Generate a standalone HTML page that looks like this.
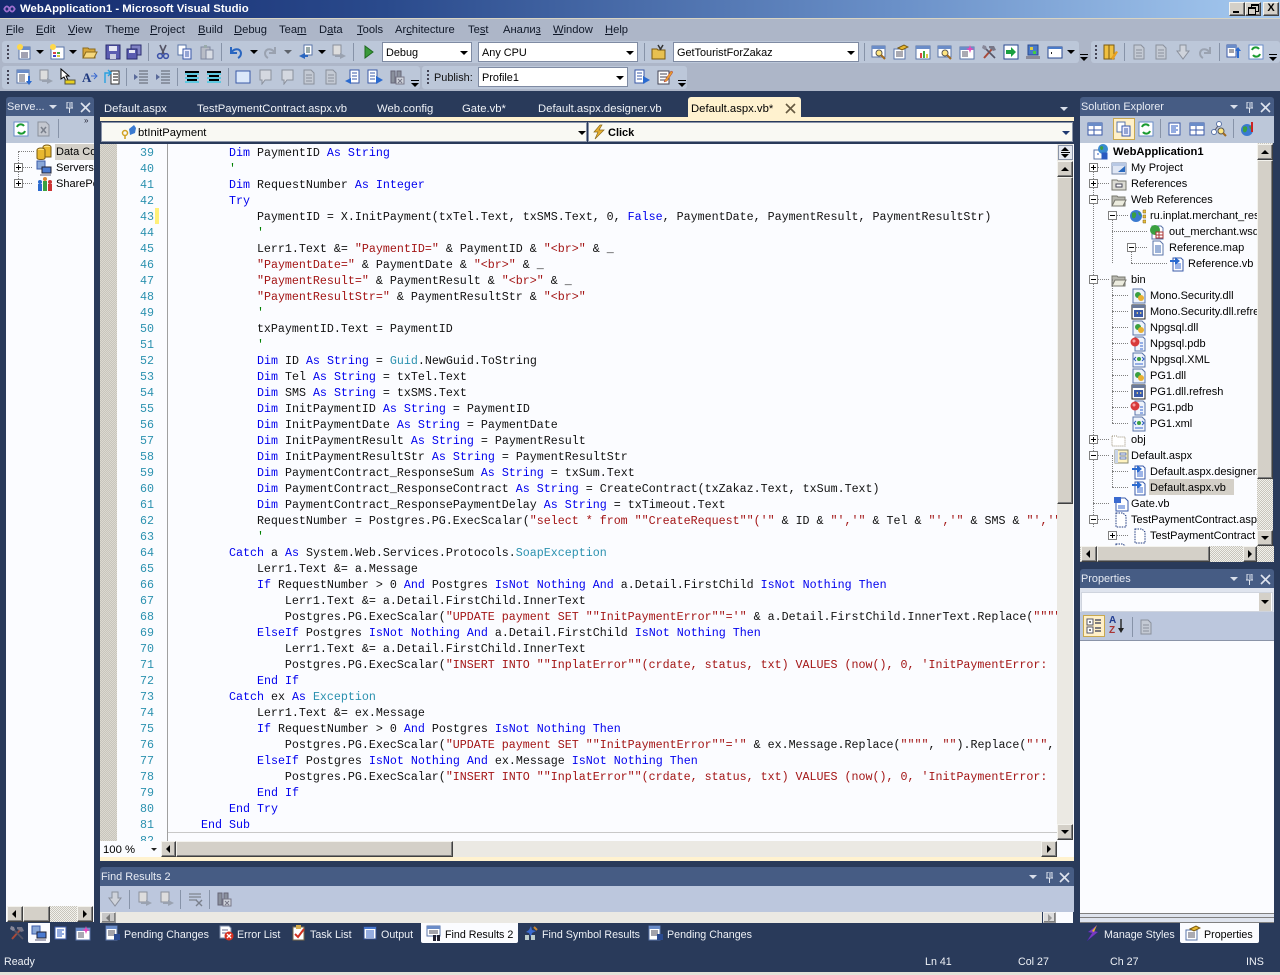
<!DOCTYPE html>
<html><head><meta charset="utf-8"><title>WebApplication1 - Microsoft Visual Studio</title>
<style>
html,body{margin:0;padding:0}
body{width:1280px;height:975px;position:relative;overflow:hidden;background:#293a5a;font:11px "Liberation Sans",sans-serif;color:#000}
div,span.a,svg.i{position:absolute}
.t{white-space:nowrap;line-height:14px}
svg.i{width:16px;height:16px;overflow:visible}
svg.c{width:11px;height:11px;color:#dfe4ee}
.w{color:#eef1f6}
.m{top:23px;color:#101828;font-size:11.2px}
.f{font-size:10.7px}
.tab{font-size:11.3px;top:102px}
.b{background:#d4d0c8;border:1px solid;border-color:#f4f3ee #404040 #404040 #f4f3ee;box-sizing:border-box;box-shadow:inset -1px -1px 0 #808080}
.tr{background:#ebe9e3}
.d{background-color:#f2f1ec;background-image:linear-gradient(45deg,#c8c5bc 25%,transparent 25%,transparent 75%,#c8c5bc 75%),linear-gradient(45deg,#c8c5bc 25%,transparent 25%,transparent 75%,#c8c5bc 75%);background-size:2px 2px;background-position:0 0,1px 1px}
.ar{width:0;height:0;border-style:solid;border-color:transparent}
.au{border-width:0 4px 4px;border-bottom-color:#000}
.ad{border-width:4px 4px 0;border-top-color:#000}
.al{border-width:4px 4px 4px 0;border-right-color:#000}
.arr{border-width:4px 0 4px 4px;border-left-color:#000}
.tb{background:#bcc7d9;border-radius:3px}
.cb{background:#fff;border:1px solid #7f8ba3;box-sizing:border-box;font-size:10.9px;line-height:20px;padding-left:3px;color:#000;white-space:nowrap}
.sep{width:1px;background:#8793a8}
.ph{background:#465c84;border-radius:3px 3px 0 0;color:#e8ecf4;font-size:10.9px;line-height:21px;padding-left:1px;box-sizing:border-box;white-space:nowrap}
pre{position:absolute;margin:0;font:11.67px/16px "Liberation Mono",monospace;color:#111}
b{font-weight:normal;color:#0000ee}
i{font-style:normal;color:#a31515}
u.n{text-decoration:none;color:#2b91af}
em{font-style:normal;color:#008000}
.tree .t{margin-top:1px}
.x{width:9px;height:9px;border:1px solid #808080;background:#fff;box-sizing:border-box}
.x:before{content:"";position:absolute;left:1px;top:3px;width:5px;height:1px;background:#000}
.p:after{content:"";position:absolute;left:3px;top:1px;width:1px;height:5px;background:#000}
.v{border-left:1px dotted #808080;width:0}
.h{border-top:1px dotted #808080;height:0}
</style></head><body>
<svg width="0" height="0" style="position:absolute">
<defs>
<symbol id="pin" viewBox="0 0 11 11"><path d="M3 0h5v6H3zM2 6h7M5.500 6v5" fill="none" stroke="currentColor"/><path d="M6 1v4" stroke="currentColor"/></symbol>
<symbol id="xx" viewBox="0 0 11 11"><path d="M1 1l9 9M10 1l-9 9" stroke="currentColor" stroke-width="1.600"/></symbol>
<symbol id="doc" viewBox="0 0 16 16"><path d="M3 1h7l3 3v11H3z" fill="#fff" stroke="#5a74a8"/><path d="M5 6h6M5 8h6M5 10h6M5 12h6" stroke="#3a64b0"/></symbol>
<symbol id="docg" viewBox="0 0 16 16"><path d="M3 1h7l3 3v11H3z" fill="#c4cad4" stroke="#8a909c"/><path d="M5 6h6M5 9h6M5 12h6" stroke="#8a909c"/></symbol>
<symbol id="new" viewBox="0 0 16 16"><path d="M3 3h11v12H3z" fill="#fff" stroke="#5a74a8"/><path d="M3 3h11v3H3z" fill="#6a8cc8"/><path d="M5 9h7M5 11h7M5 13h7" stroke="#446"/><circle cx="4" cy="3" r="3" fill="#ffd84a"/></symbol>
<symbol id="grid" viewBox="0 0 16 16"><path d="M2 3h13v12H2z" fill="#fff" stroke="#5a74a8"/><path d="M4 8h3v2H4z" fill="#d44"/><path d="M8 8h3v2H8z" fill="#4a4"/><path d="M4 11h3v2H4z" fill="#44c"/><path d="M8 11h3v2H8z" fill="#dc4"/><circle cx="4" cy="3" r="3" fill="#ffd84a"/></symbol>
<symbol id="folder" viewBox="0 0 16 16"><path d="M1 4h5l1 1h6v9H1z" fill="#d9a83a" stroke="#8a6a1c"/><path d="M1 14l3-6h11l-3 6z" fill="#f5d77c" stroke="#8a6a1c"/></symbol>
<symbol id="fg" viewBox="0 0 16 16"><path d="M1 4h5l1 1h7v9H1z" fill="#b8b8b0" stroke="#77776e"/><path d="M1 14l3-6h11l-3 6z" fill="#ececdf" stroke="#77776e"/></symbol>
<symbol id="fe" viewBox="0 0 16 16"><path d="M1 4h5l1 1h7v9H1z" fill="#fff" stroke="#9a9078" stroke-dasharray="1 1"/></symbol>
<symbol id="save" viewBox="0 0 16 16"><path d="M1 1h14v14H1z" fill="#5a5cb0" stroke="#2a2c70"/><path d="M4 2h8v5H4z" fill="#e6e8f4"/><path d="M5 10h6v5H5z" fill="#c8cce0"/></symbol>
<symbol id="saveall" viewBox="0 0 16 16"><path d="M5 1h10v10H5z" fill="#8082c4" stroke="#2a2c70"/><path d="M1 5h10v10H1z" fill="#5a5cb0" stroke="#2a2c70"/><path d="M3 6h6v3H3z" fill="#e6e8f4"/></symbol>
<symbol id="cut" viewBox="0 0 16 16"><path d="M5 1l4 9M11 1l-4 9" stroke="#556" stroke-width="1.600"/><circle cx="5" cy="12" r="2.400" fill="none" stroke="#3a50a8" stroke-width="1.500"/><circle cx="11" cy="12" r="2.400" fill="none" stroke="#3a50a8" stroke-width="1.500"/></symbol>
<symbol id="copy" viewBox="0 0 16 16"><path d="M1 1h8v10H1z" fill="#fff" stroke="#5a74a8"/><path d="M6 5h8v10H6z" fill="#eef" stroke="#3a5aa8"/><path d="M8 8h4M8 10h4M8 12h4" stroke="#3a5aa8"/></symbol>
<symbol id="paste" viewBox="0 0 16 16"><path d="M2 3h9v12H2z" fill="#b8bcc6" stroke="#8088a0"/><path d="M5 1h3v3H5z" fill="#9aa"/><path d="M7 6h7v9H7z" fill="#d8dce4" stroke="#8088a0"/></symbol>
<symbol id="undo" viewBox="0 0 16 16"><path d="M3 3v6h6M3 9c3-5 9-5 10 0 0 2-1 4-3 5" fill="none" stroke="#2a66c0" stroke-width="2"/></symbol>
<symbol id="redo" viewBox="0 0 16 16"><path d="M13 3v6H7M13 9c-3-5-9-5-10 0 0 2 1 4 3 5" fill="none" stroke="#9aa2b0" stroke-width="2"/></symbol>
<symbol id="nav" viewBox="0 0 16 16"><path d="M6 1h8v10H6z" fill="#fff" stroke="#5a74a8"/><path d="M8 4h4M8 6h4M8 8h4" stroke="#355"/><path d="M7 9v6L1 12z" fill="#2a66c0"/><path d="M6 12h4" stroke="#2a66c0" stroke-width="2"/></symbol>
<symbol id="navg" viewBox="0 0 16 16"><path d="M2 1h8v10H2z" fill="#ddd" stroke="#8a909c"/><path d="M9 9v6l6-3z" fill="#9aa2b0"/><path d="M4 12h6" stroke="#9aa2b0" stroke-width="2"/></symbol>
<symbol id="play" viewBox="0 0 16 16"><path d="M5 2l8 6-8 6z" fill="#3a9a3a" stroke="#1f6a1f"/></symbol>
<symbol id="fldp" viewBox="0 0 16 16"><path d="M1 5h5l1 1h7v9H1z" fill="#e8c050" stroke="#7a5a10"/><path d="M7 1l3 5M12 1l-3 5" stroke="#333" stroke-width="1.500"/></symbol>
<symbol id="find" viewBox="0 0 16 16"><path d="M1 2h13v11H1z" fill="#fff" stroke="#5a74a8"/><path d="M1 2h13v3H1z" fill="#6a8cc8"/><circle cx="8" cy="9" r="3" fill="#ffe680" stroke="#555"/><path d="M10 11l4 4" stroke="#a06a20" stroke-width="2"/></symbol>
<symbol id="prop" viewBox="0 0 16 16"><path d="M1 5h11v10H1z" fill="#fff" stroke="#5a74a8"/><path d="M3 8h7M3 10h7M3 12h7" stroke="#556"/><path d="M5 4l6-3 4 2-6 3z" fill="#e8b830" stroke="#7a5a10"/></symbol>
<symbol id="wnd" viewBox="0 0 16 16"><path d="M1 2h14v13H1z" fill="#fff" stroke="#5a74a8"/><path d="M1 2h14v3H1z" fill="#6a8cc8"/><path d="M5 9h2v5H5z" fill="#d44"/><path d="M8 7h2v7H8z" fill="#4a4"/><path d="M11 10h2v4h-2z" fill="#dc4"/></symbol>
<symbol id="wa" viewBox="0 0 16 16"><path d="M1 1h12v13H1z" fill="#fff" stroke="#5a74a8"/><path d="M1 1h12v3H1z" fill="#6a8cc8"/><path d="M3 6h6M3 8h6M3 10h6M3 12h6" stroke="#556"/><path d="M12 7v5h-2l3 4 3-4h-2V7z" fill="#2a6ad0"/></symbol>
<symbol id="tools" viewBox="0 0 16 16"><path d="M3 14L11 5" stroke="#a84a3a" stroke-width="2"/><path d="M8 2l5 0 2 4-3 1-2-2-2-1z" fill="#778"/><path d="M5 5l9 9" stroke="#556" stroke-width="1.600"/><path d="M2 1l3 1 1 3-2 1-3-2z" fill="#889"/></symbol>
<symbol id="go" viewBox="0 0 16 16"><path d="M1 1h14v14H1z" fill="#fff" stroke="#2a4a90"/><path d="M3 6h5V3l5 5-5 5v-3H3z" fill="#1aa040"/></symbol>
<symbol id="ctl" viewBox="0 0 16 16"><path d="M3 1h10v10H3z" fill="#4a7ac8" stroke="#2a4a90"/><path d="M5 3h3v3H5z" fill="#dc4"/><path d="M8 7h3v3H8z" fill="#4c4"/><path d="M1 12h14v3H1z" fill="#8a8a9a"/></symbol>
<symbol id="blank" viewBox="0 0 16 16"><path d="M1 3h14v11H1z" fill="#fff" stroke="#2a4a90"/><path d="M1 3h14v2H1z" fill="#4a7ac8"/><path d="M4 8h1v2H4z" fill="#222"/></symbol>
<symbol id="book" viewBox="0 0 16 16"><path d="M2 1h10v14H2z" fill="#f0c040" stroke="#7a5a10"/><path d="M7 1v14" stroke="#7a5a10"/><path d="M9 14l5-7 2 1-5 8z" fill="#e8a020"/></symbol>
<symbol id="ref" viewBox="0 0 16 16"><path d="M1 1h14v14H1z" fill="#fff" stroke="#6a8cc8"/><path d="M4 6a4 4 0 0 1 7-1M12 10a4 4 0 0 1-7 1" fill="none" stroke="#1a9a30" stroke-width="2"/></symbol>
<symbol id="stop" viewBox="0 0 16 16"><path d="M2 1h8l3 3v11H2z" fill="#c4c8d0" stroke="#8a909c"/><path d="M5 6l5 6M10 6l-5 6" stroke="#7a808c" stroke-width="1.500"/></symbol>
<symbol id="list" viewBox="0 0 16 16"><path d="M2 2h11v12H2z" fill="#fff" stroke="#3a5aa8"/><path d="M4 5h7M4 7h5M4 9h7M4 11h5" stroke="#2a5ac0"/></symbol>
<symbol id="tbl" viewBox="0 0 16 16"><path d="M1 2h14v12H1z" fill="#fff" stroke="#3a5aa8"/><path d="M1 2h14v3H1z" fill="#6a8cc8"/><path d="M7 5v9M1 9h14" stroke="#3a5aa8"/></symbol>
<symbol id="net" viewBox="0 0 16 16"><circle cx="8" cy="3" r="2.500" fill="#fff" stroke="#5a74a8"/><circle cx="3" cy="11" r="2.500" fill="#fff" stroke="#5a74a8"/><path d="M7 5l-3 4" stroke="#556"/><circle cx="10" cy="10" r="3" fill="#ffe680" stroke="#555"/><path d="M12 12l3 3" stroke="#a06a20" stroke-width="2"/></symbol>
<symbol id="globe" viewBox="0 0 16 16"><circle cx="7" cy="9" r="6" fill="#3a7ad0"/><path d="M3 6c3-2 5 0 4 3s-3 3-4 1zM9 5c2 0 4 2 3 4l-2-1z" fill="#3aa040"/><path d="M12 1v10" stroke="#c22" stroke-width="2"/></symbol>
<symbol id="web" viewBox="0 0 16 16"><path d="M1 6h10v9H1z" fill="#fff" stroke="#5a74a8"/><circle cx="10" cy="5" r="5" fill="#3a8ad0"/><path d="M7 3c2-2 4 0 3 2s-3 1-3-2z" fill="#3aa040"/><path d="M4 10h2M9 9h5v6H9z" fill="#2a5ac0" stroke="#2a5ac0"/></symbol>
<symbol id="myp" viewBox="0 0 16 16"><path d="M1 3h14v11H1z" fill="#dfe6f4" stroke="#7a8aa8"/><path d="M1 3h14v3H1z" fill="#b8c8e4"/><path d="M7 12l7-6v6z" fill="#2a6ac0"/></symbol>
<symbol id="refs" viewBox="0 0 16 16"><path d="M1 4h5l1 1h8v9H1z" fill="#dcdcd4" stroke="#77776e"/><path d="M5 8h6v3H5z" fill="#fff" stroke="#445"/></symbol>
<symbol id="webr" viewBox="0 0 16 16"><circle cx="6" cy="8" r="6" fill="#3a7ad0"/><path d="M2 5c3-2 5 0 4 3s-3 3-4 1zM8 4c2 0 3 2 3 4l-2-1z" fill="#3aa040"/><path d="M13 2h3v3h-3zM13 7h3v3h-3zM13 12h3v3h-3z" fill="#e8c040" stroke="#7a5a10" stroke-width=".5"/></symbol>
<symbol id="wsd" viewBox="0 0 16 16"><path d="M3 2h9l2 2v11H3z" fill="#fff" stroke="#5a74a8"/><circle cx="6" cy="6" r="5" fill="#3aa040"/><path d="M7 8h7v6H7z" fill="#fff" stroke="#a33"/><path d="M10 8v6M7 11h7" stroke="#a33"/></symbol>
<symbol id="vb" viewBox="0 0 16 16"><path d="M4 2h8l2 2v11H4z" fill="#fff" stroke="#3a5aa8"/><path d="M6 8h6M6 10h6M6 12h6" stroke="#3a6ad0"/><path d="M1 3h5V0l5 4-5 4V5H1z" fill="#2a6ad0" transform="translate(0 1)"/></symbol>
<symbol id="dll" viewBox="0 0 16 16"><path d="M2 1h9l3 3v11H2z" fill="#eef3fb" stroke="#5a74a8"/><circle cx="7" cy="7" r="3" fill="#3aa040"/><circle cx="10" cy="10" r="3" fill="#e8b030"/></symbol>
<symbol id="ref2" viewBox="0 0 16 16"><path d="M1 1h13v14H1z" fill="#fff" stroke="#222"/><path d="M1 1h13v3H1z" fill="#6a7a9a"/><path d="M3 6h9v7H3z" fill="#3a5aa8"/><path d="M5 9l2-1v2zM9 8l2 1-2 1z" fill="#ffe680"/></symbol>
<symbol id="pdb" viewBox="0 0 16 16"><path d="M5 1h8l2 2v12H5z" fill="#eef3fb" stroke="#5a74a8"/><path d="M10 7h3M10 10h3M10 13h3" stroke="#3a6ad0"/><circle cx="5" cy="6" r="4.500" fill="#d83a3a"/><circle cx="4" cy="5" r="1.500" fill="#f5a0a0"/></symbol>
<symbol id="xml" viewBox="0 0 16 16"><path d="M2 1h9l3 3v11H2z" fill="#eef3fb" stroke="#5a74a8"/><circle cx="8" cy="7" r="2" fill="#3aa040"/><path d="M5 5L3 7l2 2M11 5l2 2-2 2" stroke="#2a5ac0" fill="none"/><path d="M4 12h8" stroke="#3a6ad0"/></symbol>
<symbol id="aspx" viewBox="0 0 16 16"><path d="M2 2h13v13H2z" fill="#fff3c0" stroke="#8a8a70"/><path d="M2 2h3v13H2z" fill="#c8d4e8"/><path d="M7 5h6v2H7zM7 9h6v2H7z" fill="#fff" stroke="#3a5aa8" stroke-width=".7"/></symbol>
<symbol id="gate" viewBox="0 0 16 16"><path d="M3 2h9l3 3v10H3z" fill="#fff" stroke="#3a5aa8"/><path d="M1 1h7v6H1z" fill="#3a6ad0"/><path d="M5 10h7M5 12h7" stroke="#3a6ad0"/></symbol>
<symbol id="pg" viewBox="0 0 16 16"><path d="M4 1h7l3 3v11H4z" fill="#fff" stroke="#1f3a80" stroke-dasharray="1.500 1"/></symbol>
<symbol id="db" viewBox="0 0 16 16"><ellipse cx="11" cy="3" rx="4" ry="2" fill="#ffe27a" stroke="#7a5a10"/><path d="M7 3v10h8V3" fill="#e8b830" stroke="#7a5a10"/><ellipse cx="5" cy="6" rx="4" ry="2" fill="#ffe27a" stroke="#7a5a10"/><path d="M1 6v8c0 2 8 2 8 0V6" fill="#e8b830" stroke="#7a5a10"/></symbol>
<symbol id="srv" viewBox="0 0 16 16"><path d="M1 1h8v8H1z" fill="#8aa8d8" stroke="#3a5aa8"/><path d="M6 7h9v6H6z" fill="#4a7ad0" stroke="#223"/><path d="M4 14h11v2H4z" fill="#aab"/></symbol>
<symbol id="sp" viewBox="0 0 16 16"><circle cx="3" cy="6" r="2" fill="#2a6ad0"/><path d="M1 8h4v7H1z" fill="#2a6ad0"/><circle cx="8" cy="3" r="2" fill="#d83"/><path d="M6 5h4v10H6z" fill="#3aa040"/><circle cx="13" cy="6" r="2" fill="#c33"/><path d="M11 8h4v7h-4z" fill="#c33"/></symbol>
<symbol id="pend" viewBox="0 0 16 16"><path d="M1 1h11v14H1z" fill="#fff" stroke="#5a74a8"/><path d="M1 1h11v3H1z" fill="#6a8cc8"/><path d="M3 6h7M3 8h7M3 10h7" stroke="#445"/><path d="M9 9h6v6H9z" fill="#2a4a90"/></symbol>
<symbol id="err" viewBox="0 0 16 16"><path d="M2 1h9l2 2v10H2z" fill="#fff" stroke="#7a8aa8"/><path d="M4 5h6M4 8h4" stroke="#668"/><circle cx="11" cy="11" r="4.500" fill="#d83020"/><path d="M9 9l4 4M13 9l-4 4" stroke="#fff" stroke-width="1.300"/></symbol>
<symbol id="task" viewBox="0 0 16 16"><path d="M2 2h11v13H2z" fill="#fff" stroke="#7a6a4a"/><path d="M5 0h5v4H5z" fill="#d8b050"/><path d="M4 9l3 3 6-8" fill="none" stroke="#d03020" stroke-width="2"/></symbol>
<symbol id="out" viewBox="0 0 16 16"><path d="M2 2h12v12H2z" fill="#fff" stroke="#2a4a90"/><path d="M2 2h12v2H2z" fill="#4a7ad0"/><path d="M4 6h8M4 8h8M4 10h8M4 12h8" stroke="#2a5ac0"/></symbol>
<symbol id="fr" viewBox="0 0 16 16"><path d="M1 1h13v10H1z" fill="#fff" stroke="#5a74a8"/><path d="M1 1h13v3H1z" fill="#6a8cc8"/><path d="M3 6h9M3 8h9" stroke="#445"/><path d="M7 10h3v6H7zM11 10h3v6h-3z" fill="#223"/></symbol>
<symbol id="fs" viewBox="0 0 16 16"><path d="M8 1l1 4 4 1-4 2-1 4-2-4-3-1 3-2z" fill="#3a6ad0"/><path d="M2 10h4v5H2zM8 10h4v5H8z" fill="#bcc"/><path d="M11 2l3 3" stroke="#c83" stroke-width="2"/></symbol>
<symbol id="sd" viewBox="0 0 16 16"><path d="M1 3h14v12H1z" fill="#fff" stroke="#5a74a8"/><path d="M1 3h14v3H1z" fill="#6a8cc8"/><path d="M3 8h6M3 10h6M3 12h6" stroke="#556"/><path d="M11 1l1 3 3 1-3 1-1 3-1-3-3-1 3-1z" fill="#e848b8"/></symbol>
<symbol id="ms" viewBox="0 0 16 16"><path d="M12 0L3 7l4 1-5 8 11-9-4-1z" fill="#7a3ac0" stroke="#3a2a90" stroke-width=".5"/><path d="M12 0L7 6l2 1z" fill="#e8b830"/></symbol>
<symbol id="gp" viewBox="0 0 16 16"><path d="M1 1h6v6H1zM1 9h6v6H1z" fill="#fff" stroke="#556"/><path d="M9 2h6M9 5h6M9 10h6M9 13h6" stroke="#556" stroke-width="1.400"/><path d="M3 4h2M3 12h2" stroke="#000"/></symbol>
<symbol id="az" viewBox="0 0 16 16"><path d="M12 1v12" stroke="#222" stroke-width="1.400"/><path d="M9 10l3 5 3-5z" fill="#222"/></symbol>
<symbol id="indl" viewBox="0 0 16 16"><path d="M6 2h9M6 5h9M6 8h9M6 11h9M6 14h9" stroke="#5a5f6a"/><path d="M5 8L1 5v6z" fill="#5a6a9a"/></symbol>
<symbol id="cmt" viewBox="0 0 16 16"><path d="M1 2h14v2H1zM3 6h10v2H3zM3 10h10v2H3z" fill="#000"/><path d="M1 5h14M1 9h14M1 13h14" stroke="#00c8e8"/></symbol>
<symbol id="bub" viewBox="0 0 16 16"><path d="M3 1h11v10H8l-3 4v-4H3z" fill="#d4d8e0" stroke="#8a909c"/></symbol>
<symbol id="rect" viewBox="0 0 16 16"><path d="M1 2h14v12H1z" fill="#dbe8fa" stroke="#3a5aa8"/></symbol>
<symbol id="nb" viewBox="0 0 16 16"><path d="M5 1h9v13H5z" fill="#fff" stroke="#3a5aa8"/><path d="M7 4h5M7 7h5M7 10h5" stroke="#3a5aa8"/><path d="M6 9v6L0 12z" fill="#2a6ad0"/></symbol>
<symbol id="nf" viewBox="0 0 16 16"><path d="M1 1h9v13H1z" fill="#fff" stroke="#3a5aa8"/><path d="M3 4h5M3 7h5M3 10h5" stroke="#3a5aa8"/><path d="M9 7v8l7-4z" fill="#2a6ad0"/></symbol>
<symbol id="edit" viewBox="0 0 16 16"><path d="M1 2h11v13H1z" fill="#fff" stroke="#445"/><path d="M3 5h7M3 8h7M3 11h5" stroke="#445"/><path d="M8 11l6-9 2 1-6 9-3 1z" fill="#e8a030" stroke="#a33" stroke-width=".5"/></symbol>
<symbol id="sr" viewBox="0 0 16 16"><path d="M1 1h9v12H1z" fill="#fff" stroke="#3a5aa8"/><path d="M1 1h9v3H1z" fill="#6a8cc8"/><path d="M3 6h5M3 8h5" stroke="#445"/><path d="M12 3l3 4h-2v7h-2V7H9z" fill="#2a6ad0"/></symbol>
<symbol id="bino" viewBox="0 0 16 16"><path d="M2 2h4v12H2zM8 2h4v6H8z" fill="#8a909c" stroke="#667"/><path d="M7 8h8v7H7z" fill="#d0d4dc" stroke="#778"/><path d="M9 10l4 4M13 10l-4 4" stroke="#778"/></symbol>
<symbol id="cut2" viewBox="0 0 16 16"><path d="M1 3h12M1 6h12M1 9h8" stroke="#8a909c" stroke-width="1.400"/><path d="M8 9l6 6M14 9l-6 6" stroke="#7a808c" stroke-width="1.400"/></symbol>
<symbol id="hand" viewBox="0 0 16 16"><path d="M5 1h6v6h3l-6 8-6-8h3z" fill="#cfd3db" stroke="#8a909c"/></symbol>
</defs></svg>

<!-- Title bar -->
<div style="left:0;top:0;width:1280px;height:18px;background:linear-gradient(90deg,#14296c 0%,#2a4a8c 30%,#6a90c8 70%,#a6caf0 100%)"></div>
<div style="left:0;top:18px;width:1280px;height:1px;background:#d8d4c4"></div>
<svg class="i" style="left:2px;top:2px;width:15px;height:14px" viewBox="0 0 16 16"><path d="M2 8c2-4 4-4 6 0s4 4 6 0c-2-4-4-4-6 0s-4 4-6 0z" fill="none" stroke="#a070d0" stroke-width="2"/></svg>
<div class="t" style="left:20px;top:2px;color:#fff;font-size:11.4px;font-weight:bold">WebApplication1 - Microsoft Visual Studio</div>
<div class="b" style="left:1229px;top:2px;width:16px;height:14px"><div style="left:3px;top:8px;width:6px;height:2px;background:#000"></div></div>
<div class="b" style="left:1245px;top:2px;width:16px;height:14px"><div style="left:5px;top:1px;width:6px;height:5px;border:1px solid #000;border-top-width:2px"></div><div style="left:2px;top:4px;width:6px;height:5px;border:1px solid #000;border-top-width:2px;background:#d4d0c8"></div></div>
<div class="b" style="left:1263px;top:2px;width:16px;height:14px;font:bold 11px/11px 'Liberation Sans';text-align:center">X</div>

<!-- Menu and toolbar area -->
<div style="left:0;top:19px;width:1280px;height:72px;background:#adb6c8"></div>
<div class="t m" style="left:6px"><u>F</u>ile</div>
<div class="t m" style="left:36px"><u>E</u>dit</div>
<div class="t m" style="left:68px"><u>V</u>iew</div>
<div class="t m" style="left:105px">The<u>m</u>e</div>
<div class="t m" style="left:150px"><u>P</u>roject</div>
<div class="t m" style="left:198px"><u>B</u>uild</div>
<div class="t m" style="left:234px"><u>D</u>ebug</div>
<div class="t m" style="left:279px">Tea<u>m</u></div>
<div class="t m" style="left:319px">D<u>a</u>ta</div>
<div class="t m" style="left:357px"><u>T</u>ools</div>
<div class="t m" style="left:395px">Ar<u>c</u>hitecture</div>
<div class="t m" style="left:468px">Te<u>s</u>t</div>
<div class="t m" style="left:503px">Анали<u>з</u></div>
<div class="t m" style="left:553px"><u>W</u>indow</div>
<div class="t m" style="left:605px"><u>H</u>elp</div>

<div class="tb" style="left:2px;top:41px;width:1077px;height:22px"></div>
<div class="tb" style="left:1091px;top:41px;width:189px;height:22px"></div>
<div class="tb" style="left:2px;top:66px;width:418px;height:23px"></div>
<div class="tb" style="left:422px;top:66px;width:265px;height:23px"></div>
<div style="left:7px;top:45px;width:2px;height:15px;background:repeating-linear-gradient(#445 0 2px,transparent 2px 4px)"></div>
<div style="left:7px;top:70px;width:2px;height:15px;background:repeating-linear-gradient(#445 0 2px,transparent 2px 4px)"></div>
<div style="left:427px;top:70px;width:2px;height:15px;background:repeating-linear-gradient(#445 0 2px,transparent 2px 4px)"></div>
<div style="left:1095px;top:45px;width:2px;height:15px;background:repeating-linear-gradient(#445 0 2px,transparent 2px 4px)"></div>

<svg class="i" style="left:16px;top:44px"><use href="#new"/></svg><div class="ar ad" style="left:36px;top:50px"></div>
<svg class="i" style="left:49px;top:44px"><use href="#grid"/></svg><div class="ar ad" style="left:69px;top:50px"></div>
<svg class="i" style="left:82px;top:44px"><use href="#folder"/></svg>
<svg class="i" style="left:105px;top:44px"><use href="#save"/></svg>
<svg class="i" style="left:126px;top:44px"><use href="#saveall"/></svg>
<div class="sep" style="left:148px;top:43px;height:18px"></div>
<svg class="i" style="left:155px;top:44px"><use href="#cut"/></svg>
<svg class="i" style="left:177px;top:44px"><use href="#copy"/></svg>
<svg class="i" style="left:199px;top:44px"><use href="#paste"/></svg>
<div class="sep" style="left:221px;top:43px;height:18px"></div>
<svg class="i" style="left:228px;top:44px"><use href="#undo"/></svg><div class="ar ad" style="left:250px;top:50px"></div>
<svg class="i" style="left:262px;top:44px"><use href="#redo"/></svg><div class="ar ad" style="left:284px;top:50px;opacity:.5"></div>
<svg class="i" style="left:298px;top:44px"><use href="#nav"/></svg><div class="ar ad" style="left:318px;top:50px"></div>
<svg class="i" style="left:331px;top:44px"><use href="#navg"/></svg>
<div class="sep" style="left:353px;top:43px;height:18px"></div>
<svg class="i" style="left:360px;top:44px"><use href="#play"/></svg>
<div class="cb" style="left:382px;top:42px;width:90px;height:20px">Debug<div class="ar ad" style="right:3px;top:8px"></div></div>
<div class="cb" style="left:478px;top:42px;width:160px;height:20px">Any CPU<div class="ar ad" style="right:3px;top:8px"></div></div>
<div class="sep" style="left:644px;top:43px;height:18px"></div>
<svg class="i" style="left:651px;top:44px"><use href="#fldp"/></svg>
<div class="cb" style="left:673px;top:42px;width:186px;height:20px">GetTouristForZakaz<div class="ar ad" style="right:3px;top:8px"></div></div>
<div class="sep" style="left:864px;top:43px;height:18px"></div>
<svg class="i" style="left:871px;top:44px"><use href="#find"/></svg>
<svg class="i" style="left:893px;top:44px"><use href="#prop"/></svg>
<svg class="i" style="left:915px;top:44px"><use href="#wnd"/></svg>
<svg class="i" style="left:937px;top:44px"><use href="#find"/></svg>
<svg class="i" style="left:959px;top:44px"><use href="#sd"/></svg>
<svg class="i" style="left:981px;top:44px"><use href="#tools"/></svg>
<svg class="i" style="left:1003px;top:44px"><use href="#go"/></svg>
<svg class="i" style="left:1025px;top:44px"><use href="#ctl"/></svg>
<svg class="i" style="left:1047px;top:44px"><use href="#blank"/></svg><div class="ar ad" style="left:1067px;top:50px"></div>
<div style="left:1080px;top:54px;width:8px;height:1px;background:#000"></div><div class="ar ad" style="left:1080px;top:57px"></div>
<svg class="i" style="left:1102px;top:44px"><use href="#book"/></svg>
<div class="sep" style="left:1124px;top:43px;height:18px"></div>
<svg class="i" style="left:1131px;top:44px"><use href="#docg"/></svg>
<svg class="i" style="left:1153px;top:44px"><use href="#docg"/></svg>
<svg class="i" style="left:1175px;top:44px"><use href="#hand"/></svg>
<svg class="i" style="left:1197px;top:44px"><use href="#redo"/></svg>
<div class="sep" style="left:1219px;top:43px;height:18px"></div>
<svg class="i" style="left:1226px;top:44px"><use href="#sr"/></svg>
<svg class="i" style="left:1248px;top:44px"><use href="#ref"/></svg>
<div style="left:1269px;top:54px;width:8px;height:1px;background:#000"></div><div class="ar ad" style="left:1269px;top:57px"></div>

<svg class="i" style="left:16px;top:69px"><use href="#wa"/></svg>
<svg class="i" style="left:38px;top:69px"><use href="#navg"/></svg>
<svg class="i" style="left:60px;top:69px" viewBox="0 0 16 16"><path d="M1 0v10l3-2 2 4 2-1-2-4h3z" fill="#fff" stroke="#000"/><path d="M5 11h10v4H5z" fill="#e8d020" stroke="#554"/></svg>
<svg class="i" style="left:82px;top:69px" viewBox="0 0 16 16"><text x="0" y="13" font-family="Liberation Serif" font-size="13" font-weight="bold" fill="#1f3a80">A</text><path d="M9 7h6M12 4l3 3-3 3" stroke="#3a6ad0" fill="none"/></svg>
<svg class="i" style="left:104px;top:69px" viewBox="0 0 16 16"><path d="M7 2h8v13H7z" fill="#fff" stroke="#333"/><path d="M9 5h5M9 8h5M9 11h5" stroke="#111"/><path d="M1 14V4h5M4 1l3 3-3 3" stroke="#28a0e0" fill="none" stroke-width="1.400"/></svg>
<div class="sep" style="left:126px;top:68px;height:18px"></div>
<svg class="i" style="left:133px;top:69px"><use href="#indl"/></svg>
<svg class="i" style="left:155px;top:69px"><use href="#indl"/></svg>
<div class="sep" style="left:177px;top:68px;height:18px"></div>
<svg class="i" style="left:184px;top:69px"><use href="#cmt"/></svg>
<svg class="i" style="left:206px;top:69px"><use href="#cmt"/></svg>
<div class="sep" style="left:228px;top:68px;height:18px"></div>
<svg class="i" style="left:235px;top:69px"><use href="#rect"/></svg>
<svg class="i" style="left:257px;top:69px"><use href="#bub"/></svg>
<svg class="i" style="left:279px;top:69px"><use href="#bub"/></svg>
<svg class="i" style="left:301px;top:69px"><use href="#docg"/></svg>
<svg class="i" style="left:323px;top:69px"><use href="#docg"/></svg>
<svg class="i" style="left:345px;top:69px"><use href="#nb"/></svg>
<svg class="i" style="left:367px;top:69px"><use href="#nf"/></svg>
<svg class="i" style="left:389px;top:69px"><use href="#bino"/></svg>
<div style="left:411px;top:80px;width:8px;height:1px;background:#000"></div><div class="ar ad" style="left:411px;top:83px"></div>
<div class="t" style="left:434px;top:71px;font-size:10.9px;color:#111">Publish:</div>
<div class="cb" style="left:478px;top:67px;width:150px;height:20px">Profile1<div class="ar ad" style="right:3px;top:8px"></div></div>
<svg class="i" style="left:634px;top:69px"><use href="#nf"/></svg>
<svg class="i" style="left:657px;top:69px"><use href="#edit"/></svg>
<div style="left:678px;top:80px;width:8px;height:1px;background:#000"></div><div class="ar ad" style="left:678px;top:83px"></div>

<!-- Server panel -->
<div class="ph" style="left:6px;top:97px;width:88px;height:19px">Serve...</div>
<div class="ar ad" style="left:49px;top:105px;border-top-color:#d8deea"></div>
<svg class="i c" style="left:64px;top:102px"><use href="#pin"/></svg>
<svg class="i c" style="left:80px;top:102px"><use href="#xx"/></svg>
<div style="left:6px;top:116px;width:88px;height:27px;background:#bcc7d9"></div>
<div class="t" style="left:84px;top:114px;font-size:8px;color:#223">&#187;</div>
<svg class="i" style="left:13px;top:121px"><use href="#ref"/></svg>
<svg class="i" style="left:36px;top:121px"><use href="#stop"/></svg>
<div class="sep" style="left:58px;top:119px;height:19px"></div>
<div class="tree" style="left:6px;top:143px;width:88px;height:779px;background:#fbfcff;overflow:hidden">
  <div style="left:49px;top:1px;width:39px;height:16px;background:#d4d0c8"></div>
  <div class="t" style="left:50px;top:1px">Data Connections</div>
  <div class="t" style="left:50px;top:17px">Servers</div>
  <div class="t" style="left:50px;top:33px">SharePoint</div>
</div>
<div class="v" style="left:18px;top:151px;height:28px"></div>
<div class="h" style="left:18px;top:151px;width:16px"></div>
<div class="h" style="left:23px;top:167px;width:9px"></div>
<div class="h" style="left:23px;top:183px;width:9px"></div>
<div class="x p" style="left:14px;top:163px"></div>
<div class="x p" style="left:14px;top:179px"></div>
<svg class="i" style="left:36px;top:144px"><use href="#db"/></svg>
<svg class="i" style="left:36px;top:160px"><use href="#srv"/></svg>
<svg class="i" style="left:37px;top:176px"><use href="#sp"/></svg>
<div class="d" style="left:7px;top:906px;width:85px;height:16px"></div>
<div class="b" style="left:7px;top:906px;width:16px;height:16px"><div class="ar al" style="left:4px;top:3px"></div></div>
<div class="b" style="left:23px;top:906px;width:27px;height:16px"></div>
<div class="b" style="left:77px;top:906px;width:16px;height:16px"><div class="ar arr" style="left:5px;top:3px"></div></div>

<!-- Tabs -->
<div class="t w tab" style="left:104px">Default.aspx</div>
<div class="t w tab" style="left:197px">TestPaymentContract.aspx.vb</div>
<div class="t w tab" style="left:377px">Web.config</div>
<div class="t w tab" style="left:462px">Gate.vb*</div>
<div class="t w tab" style="left:538px">Default.aspx.designer.vb</div>
<div style="left:688px;top:97px;width:113px;height:21px;background:#fff2cf;border-radius:3px 3px 0 0"></div>
<div class="t tab" style="left:691px">Default.aspx.vb*</div>
<svg class="i c" style="left:785px;top:103px;color:#665a40"><use href="#xx"/></svg>
<div class="ar ad" style="left:1060px;top:107px;border-top-color:#d8deea"></div>
<div style="left:100px;top:117px;width:974px;height:4px;background:#fff2cf"></div>

<!-- Nav bar -->
<div style="left:100px;top:121px;width:974px;height:23px;background:#293a5a"></div>
<div style="left:101px;top:122px;width:486px;height:20px;background:#f9f9f3;border:1px solid #8a94a8;box-sizing:border-box"></div>
<div style="left:588px;top:122px;width:485px;height:20px;background:#f9f9f3;border:1px solid #8a94a8;box-sizing:border-box"></div>
<svg class="i" style="left:121px;top:124px" viewBox="0 0 16 16"><circle cx="4" cy="9" r="2.500" fill="none" stroke="#d0a020" stroke-width="1.500"/><path d="M4 11v4" stroke="#d0a020" stroke-width="1.500"/><path d="M8 5l5-4 2 3-1 5-5 2z" fill="#3a7ad0"/></svg>
<div class="t" style="left:138px;top:126px;font-size:11.2px">btInitPayment</div>
<div class="ar ad" style="left:578px;top:131px"></div>
<svg class="i" style="left:591px;top:124px" viewBox="0 0 16 16"><path d="M9 1L3 8h4l-3 7 9-9H8l3-5z" fill="#e8b030" stroke="#8a6a1c" stroke-width=".7"/></svg>
<div class="t" style="left:608px;top:126px;font-size:11px;font-weight:bold">Click</div>
<div class="ar ad" style="left:1062px;top:131px;border-top-color:#1f3a70"></div>

<!-- Editor -->
<div style="left:100px;top:144px;width:974px;height:697px;background:#fbfcff;overflow:hidden">
  <div class="d" style="left:0;top:0;width:17px;height:697px;background-color:#dcd9d0"></div>
  <div style="left:67px;top:0;width:1px;height:697px;background:#a0a0a0"></div>
  <div style="left:55px;top:64px;width:4px;height:16px;background:#fff07a"></div>
  <div style="left:68px;top:688px;width:890px;height:1px;background:#c8c8c8"></div>
<pre style="left:24px;top:1px;width:30px;text-align:right;color:#2b91af">39
40
41
42
43
44
45
46
47
48
49
50
51
52
53
54
55
56
57
58
59
60
61
62
63
64
65
66
67
68
69
70
71
72
73
74
75
76
77
78
79
80
81
82</pre>
<div style="left:73px;top:0;width:885px;height:697px;overflow:hidden">
<pre style="left:0;top:1px">        <b>Dim</b> PaymentID <b>As</b> <b>String</b>
        <em>'</em>
        <b>Dim</b> RequestNumber <b>As</b> <b>Integer</b>
        <b>Try</b>
            PaymentID = X.InitPayment(txTel.Text, txSMS.Text, 0, <b>False</b>, PaymentDate, PaymentResult, PaymentResultStr)
            <em>'</em>
            Lerr1.Text &amp;= <i>"PaymentID="</i> &amp; PaymentID &amp; <i>"&lt;br&gt;"</i> &amp; _
            <i>"PaymentDate="</i> &amp; PaymentDate &amp; <i>"&lt;br&gt;"</i> &amp; _
            <i>"PaymentResult="</i> &amp; PaymentResult &amp; <i>"&lt;br&gt;"</i> &amp; _
            <i>"PaymentResultStr="</i> &amp; PaymentResultStr &amp; <i>"&lt;br&gt;"</i>
            <em>'</em>
            txPaymentID.Text = PaymentID
            <em>'</em>
            <b>Dim</b> ID <b>As</b> <b>String</b> = <u class="n">Guid</u>.NewGuid.ToString
            <b>Dim</b> Tel <b>As</b> <b>String</b> = txTel.Text
            <b>Dim</b> SMS <b>As</b> <b>String</b> = txSMS.Text
            <b>Dim</b> InitPaymentID <b>As</b> <b>String</b> = PaymentID
            <b>Dim</b> InitPaymentDate <b>As</b> <b>String</b> = PaymentDate
            <b>Dim</b> InitPaymentResult <b>As</b> <b>String</b> = PaymentResult
            <b>Dim</b> InitPaymentResultStr <b>As</b> <b>String</b> = PaymentResultStr
            <b>Dim</b> PaymentContract_ResponseSum <b>As</b> <b>String</b> = txSum.Text
            <b>Dim</b> PaymentContract_ResponseContract <b>As</b> <b>String</b> = CreateContract(txZakaz.Text, txSum.Text)
            <b>Dim</b> PaymentContract_ResponsePaymentDelay <b>As</b> <b>String</b> = txTimeout.Text
            RequestNumber = Postgres.PG.ExecScalar(<i>"select * from ""CreateRequest""('"</i> &amp; ID &amp; <i>"','"</i> &amp; Tel &amp; <i>"','"</i> &amp; SMS &amp; <i>"','"</i>
            <em>'</em>
        <b>Catch</b> a <b>As</b> System.Web.Services.Protocols.<u class="n">SoapException</u>
            Lerr1.Text &amp;= a.Message
            <b>If</b> RequestNumber &gt; 0 <b>And</b> Postgres <b>IsNot</b> <b>Nothing</b> <b>And</b> a.Detail.FirstChild <b>IsNot</b> <b>Nothing</b> <b>Then</b>
                Lerr1.Text &amp;= a.Detail.FirstChild.InnerText
                Postgres.PG.ExecScalar(<i>"UPDATE payment SET ""InitPaymentError""='"</i> &amp; a.Detail.FirstChild.InnerText.Replace(<i>""""</i>
            <b>ElseIf</b> Postgres <b>IsNot</b> <b>Nothing</b> <b>And</b> a.Detail.FirstChild <b>IsNot</b> <b>Nothing</b> <b>Then</b>
                Lerr1.Text &amp;= a.Detail.FirstChild.InnerText
                Postgres.PG.ExecScalar(<i>"INSERT INTO ""InplatError""(crdate, status, txt) VALUES (now(), 0, 'InitPaymentError: '</i>
            <b>End</b> <b>If</b>
        <b>Catch</b> ex <b>As</b> <u class="n">Exception</u>
            Lerr1.Text &amp;= ex.Message
            <b>If</b> RequestNumber &gt; 0 <b>And</b> Postgres <b>IsNot</b> <b>Nothing</b> <b>Then</b>
                Postgres.PG.ExecScalar(<i>"UPDATE payment SET ""InitPaymentError""='"</i> &amp; ex.Message.Replace(<i>""""</i>, <i>""</i>).Replace(<i>"'"</i>,
            <b>ElseIf</b> Postgres <b>IsNot</b> <b>Nothing</b> <b>And</b> ex.Message <b>IsNot</b> <b>Nothing</b> <b>Then</b>
                Postgres.PG.ExecScalar(<i>"INSERT INTO ""InplatError""(crdate, status, txt) VALUES (now(), 0, 'InitPaymentError: '</i>
            <b>End</b> <b>If</b>
        <b>End</b> <b>Try</b>
    <b>End</b> <b>Sub</b></pre>
</div>
</div>

<!-- Editor vertical scrollbar -->
<div class="tr" style="left:1057px;top:144px;width:16px;height:696px"></div>
<div style="left:1058px;top:145px;width:15px;height:15px;background:#e4e8f0;border:1px solid #8a94a8;box-sizing:border-box"><div style="left:2px;top:6px;width:9px;height:1px;background:#000"></div><div class="ar au" style="left:2px;top:1px"></div><div class="ar ad" style="left:2px;top:8px"></div></div>
<div class="b" style="left:1057px;top:161px;width:16px;height:16px"><div class="ar au" style="left:3px;top:5px"></div></div>
<div class="b" style="left:1057px;top:177px;width:16px;height:327px"></div>
<div class="b" style="left:1057px;top:824px;width:16px;height:16px"><div class="ar ad" style="left:3px;top:5px"></div></div>

<!-- Editor horizontal bar -->
<div style="left:100px;top:841px;width:974px;height:16px;background:#fbfcff"></div>
<div class="t" style="left:103px;top:843px;font-size:11.3px">100 %</div>
<div class="ar ad" style="left:151px;top:848px;border-width:3px 3px 0;border-top-color:#222"></div>
<div class="tr" style="left:161px;top:841px;width:880px;height:16px"></div>
<div class="b" style="left:161px;top:841px;width:15px;height:16px"><div class="ar al" style="left:4px;top:3px"></div></div>
<div class="b" style="left:176px;top:841px;width:277px;height:16px"></div>
<div class="b" style="left:1041px;top:841px;width:16px;height:16px"><div class="ar arr" style="left:5px;top:3px"></div></div>
<div style="left:100px;top:857px;width:974px;height:4px;background:#fff2cf"></div>

<!-- Find Results -->
<div class="ph" style="left:100px;top:867px;width:974px;height:19px">Find Results 2</div>
<div class="ar ad" style="left:1029px;top:875px;border-top-color:#d8deea"></div>
<svg class="i c" style="left:1044px;top:872px"><use href="#pin"/></svg>
<svg class="i c" style="left:1059px;top:872px"><use href="#xx"/></svg>
<div style="left:100px;top:886px;width:974px;height:26px;background:#bcc7dd"></div>
<svg class="i" style="left:107px;top:891px"><use href="#hand"/></svg>
<div class="sep" style="left:129px;top:890px;height:19px"></div>
<svg class="i" style="left:137px;top:891px"><use href="#navg"/></svg>
<svg class="i" style="left:159px;top:891px"><use href="#navg"/></svg>
<div class="sep" style="left:180px;top:890px;height:19px"></div>
<svg class="i" style="left:188px;top:891px"><use href="#cut2"/></svg>
<div class="sep" style="left:209px;top:890px;height:19px"></div>
<svg class="i" style="left:216px;top:891px"><use href="#bino"/></svg>
<div class="tr" style="left:100px;top:912px;width:942px;height:11px"></div>
<div style="left:1056px;top:912px;width:17px;height:11px;background:#fbfcff"></div>
<div class="b" style="left:101px;top:912px;width:15px;height:11px;background:#c8c8c8;border-color:#eee #999 #999 #eee"><div class="ar al" style="left:4px;top:1px;border-right-color:#777"></div></div>
<div class="b" style="left:1043px;top:912px;width:13px;height:11px;background:#ddd;border-color:#eee #999 #999 #eee"><div class="ar arr" style="left:4px;top:1px;border-left-color:#999"></div></div>

<!-- Solution Explorer -->
<div class="ph" style="left:1080px;top:97px;width:194px;height:19px">Solution Explorer</div>
<div class="ar ad" style="left:1230px;top:105px;border-top-color:#d8deea"></div>
<svg class="i c" style="left:1244px;top:102px"><use href="#pin"/></svg>
<svg class="i c" style="left:1260px;top:102px"><use href="#xx"/></svg>
<div style="left:1080px;top:116px;width:194px;height:27px;background:#bcc7d9"></div>
<svg class="i" style="left:1087px;top:121px"><use href="#tbl"/></svg>
<div style="left:1113px;top:118px;width:22px;height:22px;background:#fff0c8;border:1px solid #c8a850;box-sizing:border-box"></div>
<svg class="i" style="left:1116px;top:121px"><use href="#copy"/></svg>
<svg class="i" style="left:1138px;top:121px"><use href="#ref"/></svg>
<div class="sep" style="left:1160px;top:119px;height:19px"></div>
<svg class="i" style="left:1167px;top:121px"><use href="#list"/></svg>
<svg class="i" style="left:1189px;top:121px"><use href="#tbl"/></svg>
<svg class="i" style="left:1211px;top:121px"><use href="#net"/></svg>
<div class="sep" style="left:1233px;top:119px;height:19px"></div>
<svg class="i" style="left:1240px;top:121px"><use href="#globe"/></svg>

<div class="tree" style="left:1080px;top:143px;width:177px;height:403px;background:#fbfcff;overflow:hidden">
  <div style="left:69px;top:336px;width:85px;height:16px;background:#d4d0c8"></div>
  <div class="t" style="left:33px;top:1px;font-weight:bold;font-size:11.2px">WebApplication1</div>
  <div class="t" style="left:51px;top:17px">My Project</div>
  <div class="t" style="left:51px;top:33px">References</div>
  <div class="t" style="left:51px;top:49px">Web References</div>
  <div class="t" style="left:70px;top:65px">ru.inplat.merchant_rest.ws</div>
  <div class="t" style="left:89px;top:81px">out_merchant.wsdl</div>
  <div class="t" style="left:89px;top:97px">Reference.map</div>
  <div class="t" style="left:108px;top:113px">Reference.vb</div>
  <div class="t" style="left:51px;top:129px">bin</div>
  <div class="t" style="left:70px;top:145px">Mono.Security.dll</div>
  <div class="t" style="left:70px;top:161px">Mono.Security.dll.refresh</div>
  <div class="t" style="left:70px;top:177px">Npgsql.dll</div>
  <div class="t" style="left:70px;top:193px">Npgsql.pdb</div>
  <div class="t" style="left:70px;top:209px">Npgsql.XML</div>
  <div class="t" style="left:70px;top:225px">PG1.dll</div>
  <div class="t" style="left:70px;top:241px">PG1.dll.refresh</div>
  <div class="t" style="left:70px;top:257px">PG1.pdb</div>
  <div class="t" style="left:70px;top:273px">PG1.xml</div>
  <div class="t" style="left:51px;top:289px">obj</div>
  <div class="t" style="left:51px;top:305px">Default.aspx</div>
  <div class="t" style="left:70px;top:321px">Default.aspx.designer.vb</div>
  <div class="t" style="left:70px;top:337px">Default.aspx.vb</div>
  <div class="t" style="left:51px;top:353px">Gate.vb</div>
  <div class="t" style="left:51px;top:369px">TestPaymentContract.aspx</div>
  <div class="t" style="left:70px;top:385px">TestPaymentContract</div>
  <svg class="i" style="left:13px;top:1px"><use href="#web"/></svg>
  <svg class="i" style="left:31px;top:17px"><use href="#myp"/></svg>
  <svg class="i" style="left:31px;top:33px"><use href="#refs"/></svg>
  <svg class="i" style="left:31px;top:49px"><use href="#fg"/></svg>
  <svg class="i" style="left:50px;top:65px"><use href="#webr"/></svg>
  <svg class="i" style="left:69px;top:81px"><use href="#wsd"/></svg>
  <svg class="i" style="left:70px;top:97px"><use href="#doc"/></svg>
  <svg class="i" style="left:89px;top:113px"><use href="#vb"/></svg>
  <svg class="i" style="left:31px;top:129px"><use href="#fg"/></svg>
  <svg class="i" style="left:51px;top:145px"><use href="#dll"/></svg>
  <svg class="i" style="left:51px;top:161px"><use href="#ref2"/></svg>
  <svg class="i" style="left:51px;top:177px"><use href="#dll"/></svg>
  <svg class="i" style="left:50px;top:193px"><use href="#pdb"/></svg>
  <svg class="i" style="left:51px;top:209px"><use href="#xml"/></svg>
  <svg class="i" style="left:51px;top:225px"><use href="#dll"/></svg>
  <svg class="i" style="left:51px;top:241px"><use href="#ref2"/></svg>
  <svg class="i" style="left:50px;top:257px"><use href="#pdb"/></svg>
  <svg class="i" style="left:51px;top:273px"><use href="#xml"/></svg>
  <svg class="i" style="left:31px;top:289px"><use href="#fe"/></svg>
  <svg class="i" style="left:33px;top:305px"><use href="#aspx"/></svg>
  <svg class="i" style="left:51px;top:321px"><use href="#vb"/></svg>
  <svg class="i" style="left:51px;top:337px"><use href="#vb"/></svg>
  <svg class="i" style="left:33px;top:353px"><use href="#gate"/></svg>
  <svg class="i" style="left:32px;top:369px"><use href="#pg"/></svg>
  <svg class="i" style="left:51px;top:385px"><use href="#pg"/></svg>
  <svg class="i" style="left:32px;top:400px"><use href="#pg"/></svg>
  <div class="v" style="left:13px;top:24px;height:360px"></div>
  <div class="v" style="left:32px;top:72px;height:48px"></div>
  <div class="v" style="left:51px;top:104px;height:16px"></div>
  <div class="v" style="left:32px;top:136px;height:144px"></div>
  <div class="v" style="left:32px;top:312px;height:32px"></div>
  <div class="h" style="left:18px;top:24px;width:11px"></div>
  <div class="h" style="left:18px;top:40px;width:11px"></div>
  <div class="h" style="left:18px;top:56px;width:11px"></div>
  <div class="h" style="left:37px;top:72px;width:11px"></div>
  <div class="h" style="left:32px;top:88px;width:35px"></div>
  <div class="h" style="left:56px;top:104px;width:11px"></div>
  <div class="h" style="left:51px;top:120px;width:36px"></div>
  <div class="h" style="left:18px;top:136px;width:11px"></div>
  <div class="h" style="left:32px;top:152px;width:16px"></div>
  <div class="h" style="left:32px;top:168px;width:16px"></div>
  <div class="h" style="left:32px;top:184px;width:16px"></div>
  <div class="h" style="left:32px;top:200px;width:16px"></div>
  <div class="h" style="left:32px;top:216px;width:16px"></div>
  <div class="h" style="left:32px;top:232px;width:16px"></div>
  <div class="h" style="left:32px;top:248px;width:16px"></div>
  <div class="h" style="left:32px;top:264px;width:16px"></div>
  <div class="h" style="left:32px;top:280px;width:16px"></div>
  <div class="h" style="left:18px;top:296px;width:11px"></div>
  <div class="h" style="left:18px;top:312px;width:11px"></div>
  <div class="h" style="left:32px;top:328px;width:16px"></div>
  <div class="h" style="left:32px;top:344px;width:16px"></div>
  <div class="h" style="left:13px;top:360px;width:16px"></div>
  <div class="h" style="left:18px;top:376px;width:11px"></div>
  <div class="h" style="left:37px;top:392px;width:11px"></div>
  <div class="x p" style="left:9px;top:20px"></div>
  <div class="x p" style="left:9px;top:36px"></div>
  <div class="x" style="left:9px;top:52px"></div>
  <div class="x" style="left:28px;top:68px"></div>
  <div class="x" style="left:47px;top:100px"></div>
  <div class="x" style="left:9px;top:132px"></div>
  <div class="x p" style="left:9px;top:292px"></div>
  <div class="x" style="left:9px;top:308px"></div>
  <div class="x" style="left:9px;top:372px"></div>
  <div class="x p" style="left:28px;top:388px"></div>
</div>
<div class="d" style="left:1257px;top:143px;width:16px;height:403px"></div>
<div class="b" style="left:1257px;top:144px;width:16px;height:16px"><div class="ar au" style="left:3px;top:5px"></div></div>
<div class="b" style="left:1257px;top:160px;width:16px;height:319px"></div>
<div class="b" style="left:1257px;top:530px;width:16px;height:16px"><div class="ar ad" style="left:3px;top:5px"></div></div>
<div class="d" style="left:1080px;top:546px;width:194px;height:16px"></div>
<div class="b" style="left:1081px;top:546px;width:16px;height:16px"><div class="ar al" style="left:4px;top:3px"></div></div>
<div class="b" style="left:1097px;top:546px;width:113px;height:16px"></div>
<div class="b" style="left:1243px;top:546px;width:14px;height:16px"><div class="ar arr" style="left:4px;top:3px"></div></div>

<!-- Properties -->
<div class="ph" style="left:1080px;top:569px;width:194px;height:19px">Properties</div>
<div class="ar ad" style="left:1230px;top:577px;border-top-color:#d8deea"></div>
<svg class="i c" style="left:1244px;top:574px"><use href="#pin"/></svg>
<svg class="i c" style="left:1260px;top:574px"><use href="#xx"/></svg>
<div style="left:1080px;top:588px;width:194px;height:24px;background:#dfe4ee"></div>
<div style="left:1081px;top:592px;width:192px;height:20px;background:#fbfcff;border:1px solid #cfd4de;box-sizing:border-box"></div>
<div style="left:1259px;top:593px;width:12px;height:18px;background:#d4d0c8"><div class="ar ad" style="left:2px;top:7px"></div></div>
<div style="left:1080px;top:612px;width:194px;height:28px;background:#bcc7dd"></div>
<div style="left:1083px;top:615px;width:22px;height:22px;background:#fff0c8;border:1px solid #c8a850;box-sizing:border-box"></div>
<svg class="i" style="left:1086px;top:618px"><use href="#gp"/></svg>
<svg class="i" style="left:1109px;top:618px"><use href="#az"/></svg>
<div class="t" style="left:1109px;top:616px;font:bold 10px/10px 'Liberation Sans';color:#1f3a90">A</div>
<div class="t" style="left:1109px;top:626px;font:bold 10px/10px 'Liberation Sans';color:#a33">Z</div>
<div class="sep" style="left:1132px;top:617px;height:20px"></div>
<svg class="i" style="left:1138px;top:619px"><use href="#docg"/></svg>
<div style="left:1080px;top:640px;width:194px;height:273px;background:#fbfcff;border-top:1px solid #8a94a8;box-sizing:border-box"></div>
<div style="left:1080px;top:913px;width:194px;height:10px;background:#dfe4ee;border-top:1px solid #808080;border-bottom:1px solid #808080;box-sizing:border-box"></div>
<div style="left:1080px;top:917px;width:194px;height:1px;background:#808080"></div>

<!-- Bottom tabs -->
<div style="left:28px;top:923px;width:22px;height:20px;background:#fbfcff;border-radius:0 0 2px 2px"></div>
<div style="left:421px;top:923px;width:97px;height:20px;background:#fbfcff;border-radius:0 0 2px 2px"></div>
<div style="left:1180px;top:923px;width:79px;height:20px;background:#fbfcff;border-radius:0 0 2px 2px"></div>
<svg class="i" style="left:9px;top:925px"><use href="#tools"/></svg>
<svg class="i" style="left:31px;top:925px"><use href="#srv"/></svg>
<svg class="i" style="left:53px;top:925px"><use href="#list"/></svg>
<svg class="i" style="left:75px;top:925px"><use href="#sd"/></svg>
<svg class="i" style="left:105px;top:925px"><use href="#pend"/></svg>
<div class="t w f" style="left:124px;top:928px">Pending Changes</div>
<svg class="i" style="left:218px;top:925px"><use href="#err"/></svg>
<div class="t w f" style="left:237px;top:928px">Error List</div>
<svg class="i" style="left:291px;top:925px"><use href="#task"/></svg>
<div class="t w f" style="left:310px;top:928px">Task List</div>
<svg class="i" style="left:362px;top:925px"><use href="#out"/></svg>
<div class="t w f" style="left:381px;top:928px">Output</div>
<svg class="i" style="left:426px;top:925px"><use href="#fr"/></svg>
<div class="t f" style="left:445px;top:928px">Find Results 2</div>
<svg class="i" style="left:523px;top:925px"><use href="#fs"/></svg>
<div class="t w f" style="left:542px;top:928px">Find Symbol Results</div>
<svg class="i" style="left:648px;top:925px"><use href="#pend"/></svg>
<div class="t w f" style="left:667px;top:928px">Pending Changes</div>
<svg class="i" style="left:1085px;top:925px"><use href="#ms"/></svg>
<div class="t w f" style="left:1104px;top:928px">Manage Styles</div>
<svg class="i" style="left:1185px;top:925px"><use href="#prop"/></svg>
<div class="t f" style="left:1204px;top:928px">Properties</div>

<!-- Status bar -->
<div class="t w f" style="left:4px;top:955px">Ready</div>
<div class="t w f" style="left:925px;top:955px">Ln 41</div>
<div class="t w f" style="left:1018px;top:955px">Col 27</div>
<div class="t w f" style="left:1110px;top:955px">Ch 27</div>
<div class="t w f" style="left:1246px;top:955px">INS</div>
<div style="left:0;top:972px;width:1280px;height:3px;background:#e4e2d8"></div>
</body></html>
